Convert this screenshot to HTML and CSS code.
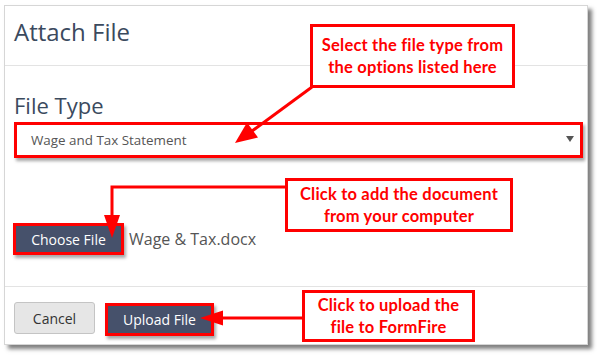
FILE: index.html
```html
<!DOCTYPE html>
<html>
<head>
<meta charset="utf-8">
<link rel="stylesheet" href="styles.css">
</head>
<body>
<div class="modal">
  <div class="modal-header">
    <h1 class="title">Attach File</h1>
  </div>
  <div class="modal-body">
    <label class="field-label">File Type</label>
    <div class="select">
      <span class="select-text">Wage and Tax Statement</span>
      <span class="select-caret"></span>
    </div>
    <div class="file-row">
      <span class="btn btn-dark btn-hl">Choose File</span>
      <span class="file-name">Wage &amp; Tax.docx</span>
    </div>
  </div>
  <div class="modal-footer">
    <span class="btn btn-light">Cancel</span>
    <span class="btn btn-dark btn-hl btn-upload">Upload File</span>
  </div>
</div>

<svg class="arrows" width="597" height="355" viewBox="0 0 597 355">
  <g stroke="#ff0000" stroke-width="3" fill="none">
    <line x1="312" y1="87" x2="252" y2="131"/>
    <polyline points="285,187 112,187 112,217"/>
    <line x1="302" y1="318" x2="221" y2="318"/>
  </g>
  <g fill="#ff0000">
    <polygon points="235,143 258,137.5 247,122.5"/>
    <polygon points="104,215 120,215 112,238"/>
    <polygon points="200,318 223,310.5 223,325.5"/>
  </g>
</svg>

<div class="callout callout-1">Select the file type from<br>the options listed here</div>
<div class="callout callout-2">Click to add the document<br>from your computer</div>
<div class="callout callout-3">Click to upload the<br>file to FormFire</div>
</body>
</html>
```

FILE: styles.css
```css
html, body {
  margin: 0;
  padding: 0;
  background: #ffffff;
}
body {
  width: 597px;
  height: 355px;
  position: relative;
  overflow: hidden;
  font-family: "Open Sans", "Liberation Sans", sans-serif;
}
.modal {
  position: relative;
  margin: 5px 0 0 4px;
  width: 582px;
  height: 338px;
  border: 1px solid #d6d6d6;
  background: #fff;
  box-shadow: 4px 4px 4px rgba(0, 0, 0, 0.5);
  display: flex;
  flex-direction: column;
}
.modal-header {
  height: 59px;
  border-bottom: 1px solid #e3e3e3;
  padding: 0 9px;
  box-sizing: content-box;
}
.title {
  margin: 0;
  padding-top: 11px;
  font-size: 24px;
  line-height: 30px;
  font-weight: 400;
  color: #3b4a5e;
}
.modal-body {
  height: 220px;
  padding: 26px 0 0 9px;
  box-sizing: border-box;
}
.field-label {
  display: block;
  font-size: 22px;
  line-height: 26px;
  color: #3b4a5e;
  margin-bottom: 4px;
}
.select {
  width: 569px;
  height: 36px;
  box-sizing: border-box;
  border: 3px solid #ff0000;
  box-shadow: 2px 3px 3px rgba(0, 0, 0, 0.35);
  display: flex;
  align-items: center;
  justify-content: space-between;
  padding: 0 6px 0 14px;
  background: #fff;
}
.select-text {
  font-size: 13.4px;
  color: #555;
}
.select-caret {
  width: 0;
  height: 0;
  border-left: 4px solid transparent;
  border-right: 4px solid transparent;
  border-top: 6px solid #555;
  margin-top: -3px;
}
.file-row {
  display: flex;
  align-items: center;
  margin-top: 65px;
  margin-left: -1px;
}
.btn {
  display: inline-flex;
  align-items: center;
  justify-content: center;
  box-sizing: border-box;
  font-size: 14px;
}
.btn-dark {
  background: #46516b;
  color: #fff;
}
.btn-hl {
  border: 3px solid #ff0000;
  box-shadow: 2px 3px 3px rgba(0, 0, 0, 0.35);
}
.file-row .btn {
  width: 111px;
  height: 32px;
}
.file-name {
  margin-left: 5px;
  font-size: 16px;
  color: #555;
}
.modal-footer {
  flex: 1;
  border-top: 1px solid #e3e3e3;
  padding: 15px 0 0 9px;
  display: flex;
  align-items: flex-start;
  gap: 10px;
}
.btn-light {
  width: 81px;
  height: 32px;
  background: #e6e6e6;
  border: 1px solid #c4c4c4;
  border-radius: 3px;
  color: #333;
}
.btn-upload {
  width: 109px;
  height: 33px;
  margin-top: 1px;
}
.arrows {
  position: absolute;
  left: 0;
  top: 0;
  pointer-events: none;
}
.callout {
  position: absolute;
  box-sizing: border-box;
  border: 3px solid #ff0000;
  background: #fff;
  color: #ff0000;
  font-family: "Lato", "Liberation Sans", sans-serif;
  font-weight: 700;
  font-size: 16.5px;
  letter-spacing: 0.2px;
  line-height: 22px;
  text-align: center;
  display: flex;
  align-items: center;
  justify-content: center;
  white-space: nowrap;
}
.callout-1 {
  left: 310px;
  top: 24px;
  width: 205px;
  height: 64px;
}
.callout-2 {
  left: 285px;
  top: 178px;
  width: 228px;
  height: 54px;
}
.callout-3 {
  left: 302px;
  top: 290px;
  width: 173px;
  height: 52px;
}
```
